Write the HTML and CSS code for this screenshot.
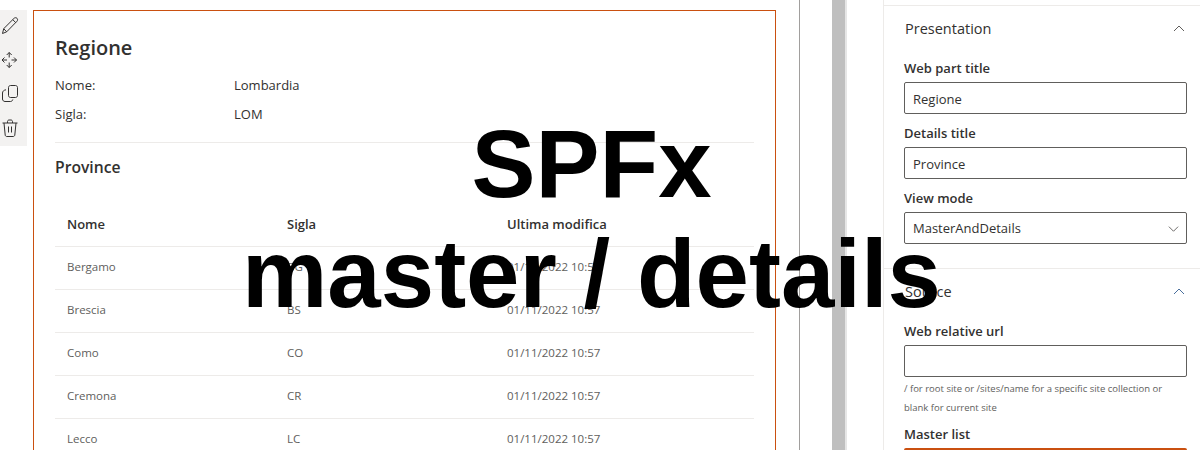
FILE: index.html
```html
<!DOCTYPE html>
<html lang="it">
<head>
<meta charset="utf-8">
<title>SPFx master / details</title>
<link rel="stylesheet" href="styles.css">
</head>
<body>
<div class="page">
  <div class="canvas">
    <div class="toolbar">
      <svg class="tool" viewBox="0 0 20 20"><path d="M2.500 17.500l1.200-4.800L14.100 2.300c.8-.8 2.100-.8 2.900 0s.8 2.100 0 2.900L6.700 15.800l-4.200 1.700zM3.700 12.700l3 3.100M12.800 3.700l3 3"/></svg>
      <svg class="tool" viewBox="0 0 20 20"><path d="M9.200 2.500v5M9.200 12.500v5M2 10h5M11.500 10h5M6.700 5l2.500-2.500L11.700 5M6.700 15l2.500 2.500 2.500-2.500M4.500 7.500L2 10l2.500 2.500M14 7.500l2.500 2.500-2.500 2.500"/></svg>
      <svg class="tool" viewBox="0 0 20 20"><path d="M8.500 3.500c0-1.100.9-2 2-2h5c1.100 0 2 .9 2 2v8c0 1.100-.9 2-2 2h-5c-1.100 0-2-.9-2-2zM6 5.800C4 6 2.500 7.200 2.500 9v6c0 1.500 1.200 2.500 2.500 2.500h5.500c1.200 0 2-.8 2.300-2"/></svg>
      <svg class="tool" viewBox="0 0 20 20"><path d="M2.500 5h15M4 5l1.200 12c.1.900.7 1.500 1.600 1.500h6.400c.9 0 1.500-.6 1.600-1.500L16 5M7.500 5V3.500c0-.8.7-1.500 1.500-1.500h2c.8 0 1.500.7 1.500 1.500V5M8.500 8.500v6M11.500 8.500v6"/></svg>
    </div>
    <section class="card">
      <h1 class="title">Regione</h1>
      <div class="facts">
        <div class="fact"><span class="fact-key">Nome:</span><span>Lombardia</span></div>
        <div class="fact"><span class="fact-key">Sigla:</span><span>LOM</span></div>
      </div>
      <h2 class="subtitle">Province</h2>
      <table class="grid">
        <thead>
          <tr><th>Nome</th><th>Sigla</th><th>Ultima modifica</th></tr>
        </thead>
        <tbody>
          <tr><td>Bergamo</td><td>BG</td><td>01/11/2022 10:57</td></tr>
          <tr><td>Brescia</td><td>BS</td><td>01/11/2022 10:57</td></tr>
          <tr><td>Como</td><td>CO</td><td>01/11/2022 10:57</td></tr>
          <tr><td>Cremona</td><td>CR</td><td>01/11/2022 10:57</td></tr>
          <tr><td>Lecco</td><td>LC</td><td>01/11/2022 10:57</td></tr>
        </tbody>
      </table>
    </section>
  </div>
  <div class="scroll-zone"><div class="thumb"></div></div>
  <aside class="panel">
    <section class="group">
      <div class="group-head"><span>Presentation</span><svg class="chev" viewBox="0 0 12 12"><path d="M1 8l5-5 5 5"/></svg></div>
      <label class="label">Web part title</label>
      <div class="input">Regione</div>
      <label class="label">Details title</label>
      <div class="input">Province</div>
      <label class="label">View mode</label>
      <div class="input select"><span>MasterAndDetails</span><svg class="chev down" viewBox="0 0 12 12"><path d="M1 4l5 5 5-5"/></svg></div>
    </section>
    <section class="group">
      <div class="group-head"><span>Source</span><svg class="chev blue" viewBox="0 0 12 12"><path d="M1 8l5-5 5 5"/></svg></div>
      <label class="label">Web relative url</label>
      <div class="input"></div>
      <p class="hint">/ for root site or /sites/name for a specific site collection or blank for current site</p>
      <label class="label">Master list</label>
      <div class="input accent"></div>
    </section>
  </aside>
</div>
<div class="overlay">SPFx<br>master / details</div>
</body>
</html>
```
FILE: styles.css
```css
* { box-sizing: border-box; }
html, body { margin: 0; height: 450px; overflow: hidden; background: #fff; }
body { font-family: "Open Sans", "Noto Sans", sans-serif; color: #323130; position: relative; }
.page { display: flex; height: 450px; overflow: hidden; }
.canvas { width: 800px; flex: none; display: flex; align-items: flex-start; padding-top: 10px; border-right: 1px solid #a19f9d; }
.toolbar { width: 27px; height: 136px; background: #f3f2f1; display: flex; flex-direction: column; align-items: flex-start; padding-top: 6px; gap: 14px; margin-right: 6px; flex: none; }
.tool { width: 20px; height: 20px; fill: none; stroke: #323130; stroke-width: 1; }
.card { width: 743px; height: 460px; flex: none; border: 1px solid #ca5010; padding: 24px 21px 0; }
.title { font-size: 20px; font-weight: 600; line-height: 26px; margin: 0 0 15px; }
.facts { border-bottom: 1px solid #edebe9; padding-bottom: 19px; }
.fact { display: flex; font-size: 13px; line-height: 18px; margin-bottom: 11px; color: #323130; }
.fact:last-child { margin-bottom: 0; }
.fact-key { width: 179px; flex: none; }
.subtitle { font-size: 15.700px; font-weight: 600; line-height: 22px; margin: 13px 0 25px; }
.grid { width: 699px; border-collapse: collapse; table-layout: fixed; }
.grid th, .grid td { text-align: left; padding: 0 12px; border-bottom: 1px solid #edebe9; }
.grid th { font-size: 13px; font-weight: 600; height: 43px; }
.grid td { font-size: 11.500px; height: 43px; padding-bottom: 2px; color: #605e5c; }
.grid th:nth-child(1) { width: 220px; }
.grid th:nth-child(2) { width: 220px; }
.scroll-zone { width: 83px; flex: none; padding-left: 32px; }
.thumb { width: 15px; height: 450px; background: #bfbfbf; border-right: 2px solid #e6e6e6; }
.panel { width: 317px; flex: none; border-left: 1px solid #edebe9; }
.group { padding: 10px 13px 0 20px; border-top: 1px solid #edebe9; margin-top: 5px; }
.group + .group { margin-top: 24px; padding-top: 10px; }
.group-head { display: flex; justify-content: space-between; align-items: center; font-size: 14.500px; line-height: 26px; padding: 0 2px 0 1px; margin-bottom: 17px; }
.chev { width: 12px; height: 12px; fill: none; stroke: #605e5c; stroke-width: 1; }
.chev.blue { stroke: #4a6f9c; }
.chev.down { width: 11px; height: 11px; }
.label { display: block; font-size: 13px; font-weight: 600; line-height: 18px; margin-bottom: 5px; }
.input { height: 32px; border: 1px solid #605e5c; border-radius: 2px; font-size: 13px; line-height: 32px; padding: 0 8px; margin-bottom: 10px; }
.select { display: flex; justify-content: space-between; align-items: center; padding-right: 7px; line-height: 30px; }
.hint { font-size: 9.500px; line-height: 19px; margin: -8px 0 8px; color: #605e5c; }
.accent { border-color: #ca5010; border-width: 2px; }
.overlay { position: absolute; left: 0; right: 17px; top: 109px; text-align: center; font-family: "Liberation Sans", Arial, sans-serif; font-weight: 700; font-size: 96px; line-height: 110px; color: #000; }
```
